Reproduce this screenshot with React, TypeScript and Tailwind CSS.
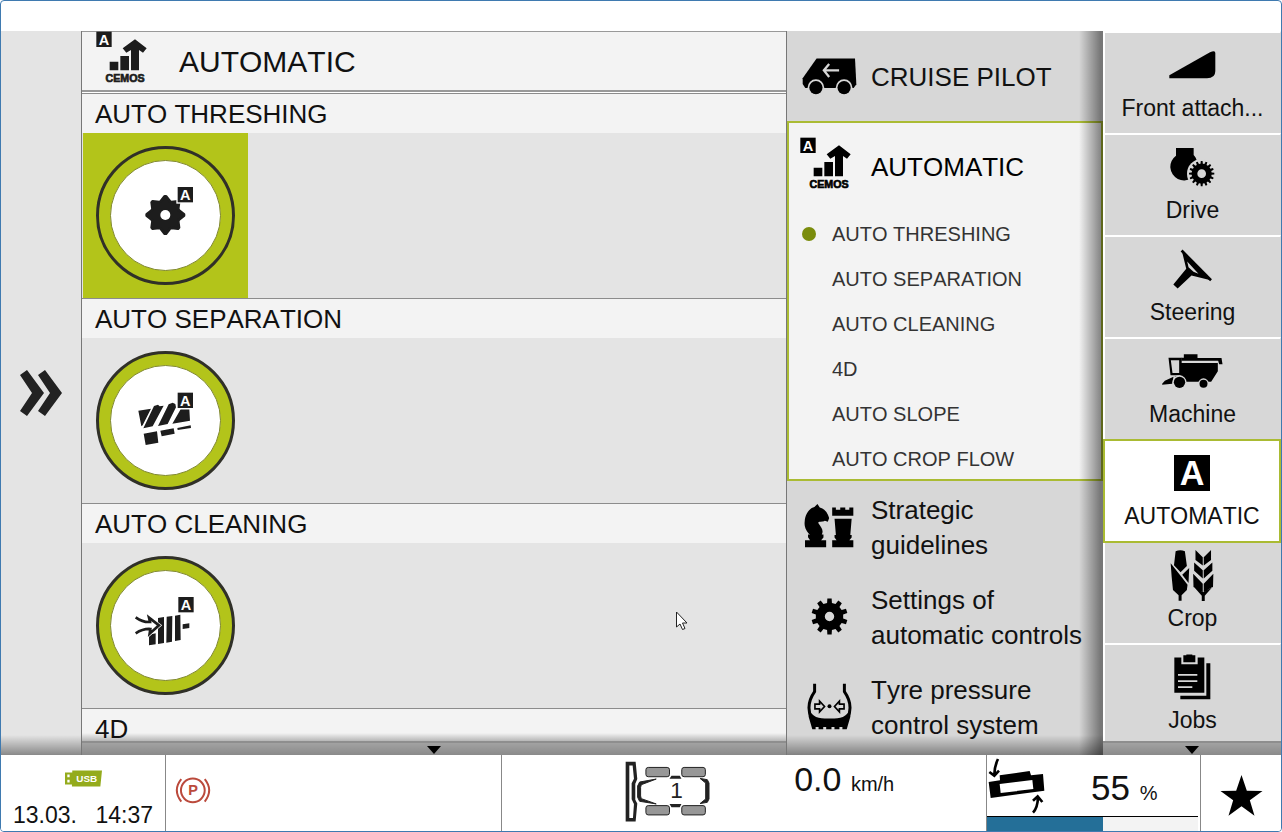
import type { ReactNode } from "react";

type DrawingProps = { box: string; className: string; children: ReactNode };

function Drawing({ box, className, children }: DrawingProps) {
  return (
    <svg viewBox={box} className={`shrink-0 fill-current ${className}`} aria-hidden="true">
      {children}
    </svg>
  );
}

function gearPath(cx: number, cy: number, outer: number, inner: number, teeth: number, tip: number, root: number) {
  const points: string[] = [];
  const step = (Math.PI * 2) / teeth;
  for (let i = 0; i < teeth; i++) {
    const mid = i * step - Math.PI / 2;
    const corners: [number, number][] = [
      [mid - step * root, inner],
      [mid - step * tip, outer],
      [mid + step * tip, outer],
      [mid + step * root, inner],
    ];
    corners.forEach(([a, r]) => points.push(`${(cx + r * Math.cos(a)).toFixed(1)} ${(cy + r * Math.sin(a)).toFixed(1)}`));
  }
  return `M${points.join("L")}Z`;
}

function Badge({ x, y, size = 46 }: { x: number; y: number; size?: number }) {
  return (
    <>
      <rect x={x} y={y} width={size} height={size} />
      <text x={x + size / 2} y={y + size * 0.84} textAnchor="middle" fontSize={size * 0.95} fontWeight="bold" fill="#fff">
        A
      </text>
    </>
  );
}

function CemosIcon() {
  return (
    <Drawing box="60 320 153 156" className="mb-2 h-[52px] w-[51px]">
      <Badge x={61} y={322} />
      <path d="M101 412h26v26h-26zM133 395h26v43h-26zM165 438V377l-14 8-11-13 37-27 35 27-11 13-12-8v61z" />
      <text x="147" y="472" textAnchor="middle" fontSize="32" fontWeight="bold" stroke="currentColor" strokeWidth="2">
        CEMOS
      </text>
    </Drawing>
  );
}

function CruiseIcon() {
  return (
    <Drawing box="62 84 166 114" className="h-[38px] w-[55px]">
      <path d="M64 148 106 88h116l4 78-8 11H72l-8-12z" />
      <circle cx="104" cy="176" r="25" fill="#d7d7d7" />
      <circle cx="189" cy="176" r="25" fill="#d7d7d7" />
      <circle cx="104" cy="176" r="20" />
      <circle cx="189" cy="176" r="20" />
      <path d="M174 124h-44M144 105l-16 19 16 20" fill="none" stroke="#d7d7d7" strokeWidth="7" />
    </Drawing>
  );
}

function ChessIcon() {
  return (
    <Drawing box="72 98 149 131" className="h-11 w-[50px]">
      <path d="M112 98l7 10c15 4 24 17 28 32l-4 11-9-3c-7 5-16 0-20 6 8 12 18 22 11 35h5v9l-7 8h15v21H75v-21h15l-6-9v-8h6c-10-8-18-23-16-38 1-22 13-40 29-44z" />
      <path d="M156 108h11v7h13v-7h15v7h12v-7h12v25h-63zM163 142h51l-4 48h4v8l-7 8h12v21h-63v-21h13l-6-8v-8h4z" />
    </Drawing>
  );
}

function SettingsIcon() {
  return (
    <Drawing box="92 383 110 110" className="h-[37px] w-[37px]">
      <path fillRule="evenodd" d={`${gearPath(147, 438, 54, 41, 10, 0.19, 0.28)}M133 438a14 14 0 1 0 28 0a14 14 0 1 0-28 0z`} />
    </Drawing>
  );
}

function TyreIcon() {
  return (
    <Drawing box="79 638 136 142" className="h-[47px] w-[45px]">
      <path d="M102 640v24c-17 24-22 53-10 80M192 640v24c17 24 22 53 10 80" fill="none" stroke="currentColor" strokeWidth="9" />
      <path d="M84 712c10 34 34 33 63 33s53 1 63-33v28l-11 38h-13v-7h-9v7h-15v-7h-9v7h-16v-7h-9v7h-14v-7h-9v7H95l-11-38z" />
      <path d="M103 702h14v-9l15 16-15 16v-9h-14zM191 702h-14v-9l-15 16 15 16v-9h14z" fill="none" stroke="currentColor" strokeWidth="5" />
      <circle cx="147" cy="708" r="6" />
    </Drawing>
  );
}

function FrontIcon() {
  return (
    <Drawing box="220 75 141 87" className="h-[29px] w-[47px]">
      <path d="M221 151 343 82q16-8 16 2v54q0 22-25 22H221z" />
    </Drawing>
  );
}

function DriveIcon() {
  return (
    <Drawing box="223 366 135 120" className="h-10 w-[45px]">
      <path d="M241 369h53v21c8 8 12 20 12 35a41 41 0 1 1-65-33z" />
      <circle cx="318" cy="446" r="44" fill="#d7d7d7" />
      <path fillRule="evenodd" d={`${gearPath(318, 446, 38, 30, 16, 0.18, 0.3)}M305 446a13 13 0 1 0 26 0a13 13 0 1 0-26 0z`} />
    </Drawing>
  );
}

function SteeringIcon() {
  return (
    <Drawing box="235 42 118 120" className="h-10 w-[39px]">
      <path d="M261 46l89 90" stroke="currentColor" strokeWidth="8" />
      <path fillRule="evenodd" d="M262 48l13 53-39 48 13 12 42-39 58 14zM278 79l34 37-15-6-15-13z" />
    </Drawing>
  );
}

function MachineIcon() {
  return (
    <Drawing box="200 352 182 102" className="h-[34px] w-[61px]">
      <path fillRule="evenodd" d="M219 363h40l-2 53h-32zM226 371l5 38h20V371z" />
      <path d="M265 353h41v11h72l3 19h-10l-3-11H258v-9h7zM255 379h112v25l-20 31h-80l-30-15 18-2zM200 441l8-9 26-12-4 21-30 3z" />
      <circle cx="252" cy="437" r="21" fill="#d7d7d7" />
      <circle cx="324" cy="441" r="16" fill="#d7d7d7" />
      <circle cx="252" cy="437" r="17" />
      <circle cx="324" cy="441" r="12" />
    </Drawing>
  );
}

function AutomaticIcon() {
  return (
    <Drawing box="237 60 108 108" className="h-9 w-9">
      <Badge x={237} y={60} size={108} />
    </Drawing>
  );
}

function CropIcon() {
  return (
    <Drawing box="224 344 136 157" className="h-[52px] w-[45px]">
      <path d="M241 351q14-6 28 0l6 44-19 19-20-21zM226 387l30 38 21 27-2 16-16 16v16h-9v-16l-17-16-4-40zM282 401l-2 46-19-25z" />
      <path d="M301 347l22 22v25l-22-17zM297 385l26 23v25l-26-23zM294 419l29 30v26l-28-16zM348 347l-22 22v25l22-17zM352 385l-26 23v25l26-23zM355 419l-29 30v26l28-16zM296 458l25 16h7l25-16-24 27v16h-9v-16z" />
    </Drawing>
  );
}

function JobsIcon() {
  return (
    <Drawing box="236 658 111 137" className="h-[46px] w-[37px]">
      <path d="M237 668h21v20h49v-20h20v106h-90zM264 661h9v-2h18v2h9v21h-36zM333 685h12v108h-90v-10h78z" />
      <path d="M248 720h58M248 739h58M248 757h43" stroke="#d7d7d7" strokeWidth="5" />
    </Drawing>
  );
}

function ThreshingDrawing() {
  return (
    <Drawing box="92 93 330 330" className="size-[110px]">
      <path
        stroke="currentColor"
        strokeWidth="8"
        strokeLinejoin="round"
        d={gearPath(255, 255, 56, 43, 8, 0.05, 0.42)}
      />
      <circle cx="255" cy="255" r="15" fill="#fff" />
      <rect x="288" y="167" width="54" height="54" fill="#fff" />
      <Badge x={292} y={171} />
    </Drawing>
  );
}

function SeparationDrawing() {
  return (
    <Drawing box="93 77 330 330" className="size-[110px]">
      <path d="M175 211l38-6-25 50-4 3zM222 197l12-4 5 5 12-2-33 62-28 6zM266 192l12-5 8 4 2 10-25 50-29 6zM302 207h26l2 34-53 9zM191 280l40-7 4 34-38 7zM241 271l40-7 3 16-39 8zM292 263l40-8 1 8-40 6z" />
      <rect x="289" y="153" width="54" height="54" fill="#fff" />
      <Badge x={293} y={157} />
    </Drawing>
  );
}

function CleaningDrawing() {
  return (
    <Drawing box="93 77 330 330" className="size-[110px]">
      <path d="M207 268l20-4v33l-20 3zM234 218l18-3v78l-18 3zM260 214l17-2-1 77-17 3zM285 211l16-3 1 76-17 3zM308 237l20-3v14l-20 3z" />
      <g fill="none" strokeLinejoin="miter">
        <path d="M167 216c14 10 28 15 43 14l-3-13 30 23-28 25 2-14c-15-1-30 4-44 13" fill="#fff" stroke="#fff" strokeWidth="12" />
        <path d="M167 216c14 10 28 15 43 14l-3-13 30 23-28 25 2-14c-15-1-30 4-44 13" stroke="currentColor" strokeWidth="8" />
      </g>
      <Badge x={295} y={155} />
    </Drawing>
  );
}

function UsbIcon() {
  return (
    <Drawing box="195 212 112 50" className="h-[17px] w-[37px] text-[#94ab1c]">
      <path fillRule="evenodd" d="M217 213h90l-5 48h-86v-6h-21v-36h22zM202 225v8h7v-8zM202 241v8h7v-8z" />
      <text x="261" y="248" textAnchor="middle" fontSize="30" fontWeight="bold" fill="#fff">
        USB
      </text>
    </Drawing>
  );
}

function ParkingBrakeIcon() {
  return (
    <Drawing box="525 232 109 81" className="ml-[9px] h-[27px] w-9 text-[#bb4a3c]">
      <g fill="none" stroke="currentColor" strokeWidth="6">
        <circle cx="579" cy="272" r="36" />
        <path d="M544 238q-27 33 0 68M615 238q27 33 0 68" />
      </g>
      <text x="580" y="287" textAnchor="middle" fontSize="44" fontWeight="bold">
        P
      </text>
    </Drawing>
  );
}

function VehicleTopDrawing() {
  return (
    <Drawing box="74 64 256 183" className="h-[61px] w-[85px] text-[#222]">
      <path fillRule="evenodd" d="M76 66h30l5 52-6 14v48l6 12-5 54H76zM87 77v158h11l3-42-7-14v-48l7-14-4-40z" />
      <path d="M168 118l-50 9-6 12v34l6 12 50 8-45-16-2-8v-26l2-8zM300 116l22 4 5 10v48l-5 10-22 4 17-14v-48z" stroke="currentColor" strokeWidth="3" />
      <path d="M214 108h25l5 9h-36zM214 203h25l5-10h-36z" />
      <g fill="#979797" stroke="currentColor" strokeWidth="3">
        <rect x="137" y="83" width="71" height="28" rx="7" />
        <rect x="245" y="83" width="71" height="28" rx="7" />
        <rect x="137" y="198" width="71" height="28" rx="7" />
        <rect x="245" y="198" width="71" height="28" rx="7" />
      </g>
      <text x="229" y="175" textAnchor="middle" fontSize="68">
        1
      </text>
    </Drawing>
  );
}

function LevelDrawing() {
  return (
    <Drawing box="55 54 171 168" className="ml-px h-14 w-[57px] text-black">
      <path fillRule="evenodd" d="M57 126l34-5-1-15 90-13 4 13 36-4 4 50-161 22zM90 132l3 27 98-12-3-27z" />
      <path d="M85 57q-10 20-11 46M59 96l15 11 14-15M190 218q14-14 15-46M190 182l14-13 14 17" fill="none" stroke="currentColor" strokeWidth="8" />
    </Drawing>
  );
}

const sections = [
  { title: "AUTO THRESHING", drawing: <ThreshingDrawing />, active: true },
  { title: "AUTO SEPARATION", drawing: <SeparationDrawing />, active: false },
  { title: "AUTO CLEANING", drawing: <CleaningDrawing />, active: false },
  { title: "4D", drawing: null, active: false },
];

const submenu = ["AUTO THRESHING", "AUTO SEPARATION", "AUTO CLEANING", "4D", "AUTO SLOPE", "AUTO CROP FLOW"];

const tabs = [
  { label: "Front attach...", icon: <FrontIcon /> },
  { label: "Drive", icon: <DriveIcon /> },
  { label: "Steering", icon: <SteeringIcon /> },
  { label: "Machine", icon: <MachineIcon /> },
  { label: "AUTOMATIC", icon: <AutomaticIcon />, active: true },
  { label: "Crop", icon: <CropIcon /> },
  { label: "Jobs", icon: <JobsIcon /> },
];

function MenuItem({ icon, label }: { icon: ReactNode; label: string }) {
  return (
    <button className="flex h-[90px] w-full shrink-0 items-center px-3 text-left text-[26px] leading-[35px]">
      <span className="flex w-[60px] shrink-0 justify-center text-black">{icon}</span>
      <span className="ml-3 flex-1 pt-[3px]">{label}</span>
    </button>
  );
}

function ScrollBar() {
  return (
    <button
      aria-label="Scroll down"
      className="absolute inset-x-0 bottom-0 flex h-3.5 items-end justify-center border-t-2 border-[#8e8e8e] bg-linear-to-b from-[#a2a2a2] to-[#8a8a8a] pb-px"
    >
      <Drawing box="0 0 14 8" className="h-2 w-3.5 text-black">
        <path d="M0 0h14L7 8z" />
      </Drawing>
    </button>
  );
}

export default function App() {
  return (
    <div className="flex h-screen flex-col overflow-hidden rounded-sm border border-[#3f7ab0] bg-white pt-[30px] font-['Liberation_Sans',Arial,sans-serif] text-[#111] [font-kerning:none]">
      <div className="flex min-h-0 flex-1">
        <aside className="relative flex w-20 shrink-0 items-center justify-center bg-[#e4e4e4]">
          <button aria-label="Expand">
            <Drawing box="0 0 42 46" className="h-[46px] w-[42px] text-[#222]">
              <path d="M0 5 7 0l17 23L7 46l-7-5 12-18zM18 5l7-5 17 23-17 23-7-5 12-18z" />
            </Drawing>
          </button>
          <div className="pointer-events-none absolute inset-x-0 bottom-0 h-5 bg-linear-to-t from-black/40 to-transparent" />
        </aside>

        <main className="relative flex min-w-0 flex-1 flex-col overflow-hidden border-x border-[#777] bg-[#e4e4e4]">
          <header className="flex h-[61px] shrink-0 items-center border-t border-b-2 border-[#999] bg-[#f3f3f3] pl-3.5 text-[#1c1c1c]">
            <CemosIcon />
            <h1 className="ml-8 pt-0.5 text-[30px] leading-9 text-[#111]">AUTOMATIC</h1>
          </header>
          <div className="h-px shrink-0 bg-white" />
          {sections.map((section) => (
            <section key={section.title} className="flex h-[205px] shrink-0 flex-col border-t border-[#8c8c8c]">
              <h2 className="h-[39px] bg-[#f3f3f3] pl-[13px] text-[26px] leading-[41px]">{section.title}</h2>
              <div className="flex flex-1 pl-px">
                {section.drawing && (
                  <button
                    aria-label={section.title}
                    className={`flex size-[165px] items-center justify-center ${section.active ? "bg-[#b3c41a]" : ""}`}
                  >
                    <span className="flex size-[139px] items-center justify-center rounded-full border-3 border-[#303028] bg-[#b3c41a] text-[#1d1d1d]">
                      <span className="flex size-[111px] items-center justify-center overflow-hidden rounded-full border border-[#80882f] bg-white">
                        {section.drawing}
                      </span>
                    </span>
                  </button>
                )}
              </div>
            </section>
          ))}
          <div className="pointer-events-none absolute inset-x-0 bottom-3.5 h-2 bg-linear-to-t from-black/25 to-transparent" />
          <ScrollBar />
          <svg viewBox="0 0 12 19" className="absolute top-[580px] left-[594px] h-[19px] w-3" aria-hidden="true">
            <path d="M.5 1v15l3.500-3 2.500 5.500 2.500-1-2.500-5.500H11z" fill="#fff" stroke="#222" />
          </svg>
        </main>

        <nav aria-label="Settings" className="relative w-[316px] shrink-0 overflow-hidden bg-[#d7d7d7]">
          <MenuItem icon={<CruiseIcon />} label="CRUISE PILOT" />
          <div className="h-[360px] border-2 border-[#aabb33] bg-[#f3f3f3]">
            <button className="flex h-[88px] w-full items-center pl-[11px] text-[26px] leading-[35px] text-black">
              <CemosIcon />
              <span className="ml-5">AUTOMATIC</span>
            </button>
            <ul>
              {submenu.map((item, index) => (
                <li key={item}>
                  <button className="flex h-[45px] w-full items-center pl-[13px] text-xl text-[#333]">
                    <span className={`mr-4 size-3.5 rounded-full ${index === 0 ? "bg-[#7a8c0c]" : ""}`} />
                    {item}
                  </button>
                </li>
              ))}
            </ul>
          </div>
          <MenuItem icon={<ChessIcon />} label="Strategic guidelines" />
          <MenuItem icon={<SettingsIcon />} label="Settings of automatic controls" />
          <MenuItem icon={<TyreIcon />} label="Tyre pressure control system" />
          <div className="pointer-events-none absolute inset-x-0 bottom-0 h-5 bg-linear-to-t from-black/40 to-transparent" />
          <div className="pointer-events-none absolute inset-y-0 right-0 w-6 bg-linear-to-l from-black/45 from-10% to-transparent" />
        </nav>

        <nav aria-label="Categories" className="relative w-[178px] shrink-0 overflow-hidden bg-white">
          {tabs.map((tab) => (
            <button
              key={tab.label}
              className={`flex w-full flex-col items-center ${
                tab.active
                  ? "relative -mb-0.5 h-[104px] border-2 border-[#aabb33] bg-white"
                  : "h-[102px] border-t-2 border-r border-l-2 border-t-white border-r-[#d7d7d7] border-l-white bg-[#d7d7d7]"
              }`}
            >
              <span className="flex h-[63px] shrink-0 items-center text-black">{tab.icon}</span>
              <span className="text-[23px] leading-6">{tab.label}</span>
            </button>
          ))}
          <ScrollBar />
        </nav>
      </div>

      <footer className="flex h-[76px] shrink-0 bg-white">
        <div className="flex w-[165px] shrink-0 flex-col items-center border-r border-[#888] pt-[15px]">
          <UsbIcon />
          <p className="mt-4 flex w-full justify-between pr-3 pl-3 text-[23px] leading-6">
            <span>13.03.</span>
            <time>14:37</time>
          </p>
        </div>
        <div className="flex min-w-0 flex-[336] items-start border-r border-[#888] pt-[22px]">
          <ParkingBrakeIcon />
        </div>
        <div className="flex min-w-0 flex-[485] items-start">
          <div className="ml-[123px] pt-1.5">
            <VehicleTopDrawing />
          </div>
          <p className="ml-[84px] pt-1 text-[34px] leading-10 whitespace-nowrap">
            0.0 <span className="text-xl">km/h</span>
          </p>
        </div>
        <div className="flex w-[214px] shrink-0 flex-col border-l border-[#888]">
          <div className="mr-[2px] flex h-[62px] items-start border-b border-black pt-[3px]">
            <LevelDrawing />
            <p className="ml-[46px] pt-2.5 text-[35px] leading-10 whitespace-nowrap">
              55 <span className="text-xl">%</span>
            </p>
          </div>
          <div className="mr-[2px] flex-1 bg-[#f3f3f3]">
            <div className="h-full bg-[#246f98]" style={{ width: "55%" }} />
          </div>
        </div>
        <button aria-label="Favourites" className="flex w-[81px] shrink-0 items-center justify-center border-l border-[#888] pt-1">
          <Drawing box="749 102 128 123" className="h-[41px] w-[43px] text-black">
            <path d="M813 102l16 47 47 1-38 28 14 46-39-28-39 28 14-46-38-28 47-1z" />
          </Drawing>
        </button>
      </footer>
    </div>
  );
}
